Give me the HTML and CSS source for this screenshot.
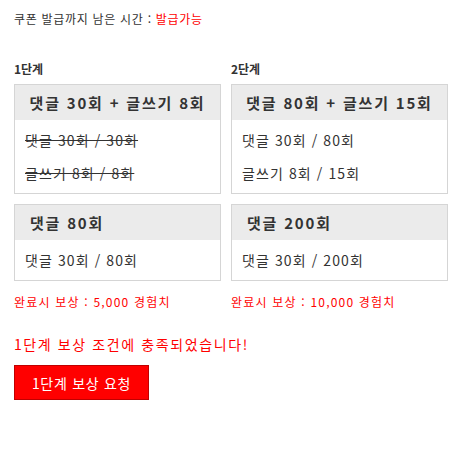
FILE: index.html
```html
<!DOCTYPE html>
<html lang="ko">
<head>
<meta charset="utf-8">
<link rel="stylesheet" href="styles.css">
</head>
<body>
<div class="page">
  <div class="timer">쿠폰 발급까지 남은 시간 : <span class="red">발급가능</span></div>
  <div class="cols">
    <div class="col col-left">
      <div class="label">1단계</div>
      <div class="box">
        <div class="box-head center">댓글 30회 + 글쓰기 8회</div>
        <div class="box-body">
          <p class="done">댓글 30회 / 30회</p>
          <p class="done">글쓰기 8회 / 8회</p>
        </div>
      </div>
      <div class="box second">
        <div class="box-head">댓글 80회</div>
        <div class="box-body">
          <p>댓글 30회 / 80회</p>
        </div>
      </div>
      <div class="reward">완료시 보상 : 5,000 경험치</div>
    </div>
    <div class="col col-right">
      <div class="label">2단계</div>
      <div class="box">
        <div class="box-head center">댓글 80회 + 글쓰기 15회</div>
        <div class="box-body">
          <p>댓글 30회 / 80회</p>
          <p>글쓰기 8회 / 15회</p>
        </div>
      </div>
      <div class="box second">
        <div class="box-head">댓글 200회</div>
        <div class="box-body">
          <p>댓글 30회 / 200회</p>
        </div>
      </div>
      <div class="reward">완료시 보상 : 10,000 경험치</div>
    </div>
  </div>
  <div class="message">1단계 보상 조건에 충족되었습니다!</div>
  <button class="request">1단계 보상 요청</button>
</div>
</body>
</html>
```
FILE: styles.css
```css
html, body {
  margin: 0;
  padding: 0;
  background: #fff;
}
body {
  font-family: "Noto Sans CJK KR", "Noto Sans", sans-serif;
  color: #333;
}
.page {
  padding: 11px 14px 0 14px;
}
.timer {
  font-size: 12px;
  line-height: 16px;
  letter-spacing: 0.7px;
}
.red {
  color: #ff0000;
}
.cols {
  display: flex;
  gap: 10px;
  margin-top: 34px;
}
.col-left {
  width: 207px;
}
.col-right {
  width: 217px;
}
.label {
  font-size: 12px;
  font-weight: bold;
  line-height: 16px;
  margin-bottom: 7px;
}
.box {
  border: 1px solid #d5d5d5;
  background: #fff;
}
.second {
  margin-top: 10px;
}
.box-head {
  background: #ebebeb;
  height: 35px;
  line-height: 35px;
  font-size: 15px;
  font-weight: bold;
  letter-spacing: 1.8px;
  padding-left: 15px;
  white-space: nowrap;
}
.box-head.center {
  padding-left: 0;
  text-align: center;
}
.box-body {
  padding: 4px 10px 3px 10px;
}
.box-body p {
  margin: 0;
  font-size: 14px;
  line-height: 33px;
  letter-spacing: 1.1px;
  white-space: nowrap;
}
.done {
  text-decoration: line-through;
}
.reward {
  margin-top: 13px;
  font-size: 12px;
  line-height: 16px;
  letter-spacing: 1.2px;
  color: #ff0000;
}
.message {
  margin-top: 25px;
  font-size: 14px;
  line-height: 18px;
  letter-spacing: 1.6px;
  color: #ff0000;
}
.request {
  margin-top: 12px;
  width: 135px;
  height: 35px;
  background: #ff0000;
  border: 1px solid #c00000;
  color: #fff;
  font-family: "Noto Sans CJK KR", "Noto Sans", sans-serif;
  font-size: 14px;
  letter-spacing: 0.7px;
  padding: 0;
  cursor: pointer;
}
```
